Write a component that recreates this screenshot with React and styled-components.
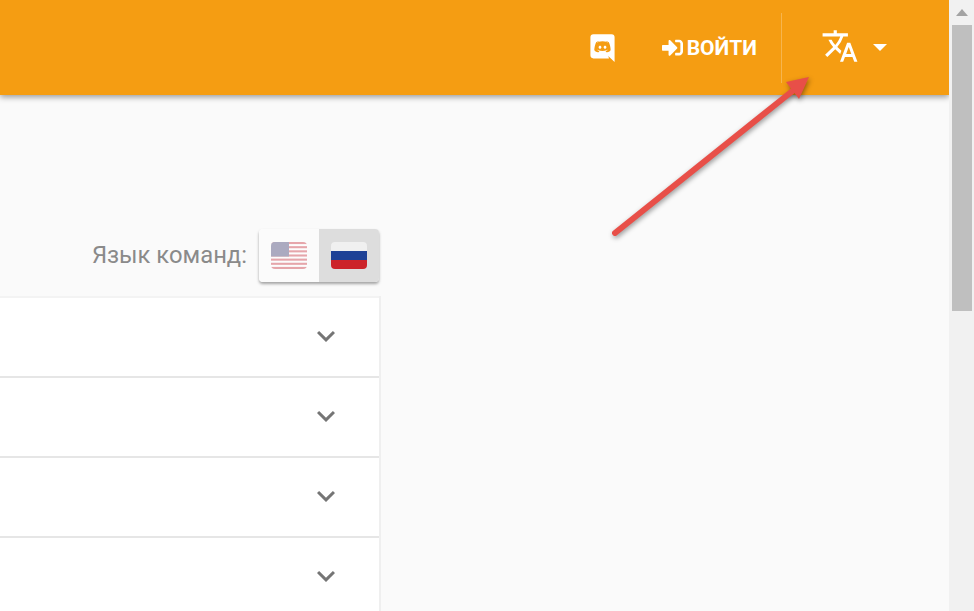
import React from 'react';
import styled, { createGlobalStyle } from 'styled-components';
import { MdTranslate, MdExpandMore } from 'react-icons/md';
import { FaSignInAlt } from 'react-icons/fa';

const Global = createGlobalStyle`
  html, body {
    margin: 0;
    padding: 0;
    height: 100%;
    overflow: hidden;
    background: #fafafa;
    font-family: Roboto, "Liberation Sans", sans-serif;
  }
`;

const Page = styled.div`
  position: relative;
  display: flex;
  width: 974px;
  height: 611px;
  overflow: hidden;
`;

const Main = styled.div`
  flex: 1;
  display: flex;
  flex-direction: column;
  background: #fafafa;
`;

const Header = styled.header`
  height: 95px;
  flex-shrink: 0;
  display: flex;
  align-items: center;
  justify-content: flex-end;
  background: #f59d12;
  box-shadow: 0 2px 6px rgba(0, 0, 0, 0.4);
  color: #fff;
`;

const DiscordLink = styled.a`
  display: flex;
  margin-right: 45px;
`;

const LoginLink = styled.a`
  display: flex;
  align-items: center;
  gap: 4px;
  margin-right: 24px;
  font-size: 21px;
  font-weight: 700;
`;

const Divider = styled.div`
  width: 1px;
  height: 70px;
  background: rgba(255, 255, 255, 0.25);
`;

const LangMenu = styled.div`
  display: flex;
  align-items: center;
  gap: 14px;
  width: 167px;
  padding-left: 39px;
  padding-bottom: 3px;
  box-sizing: border-box;
`;

const Caret = styled.span`
  width: 0;
  height: 0;
  margin-top: 2px;
  border-left: 7.5px solid transparent;
  border-right: 7.5px solid transparent;
  border-top: 7.5px solid #fff;
`;

const Content = styled.main`
  width: 381px;
  display: flex;
  flex-direction: column;
`;

const LangRow = styled.div`
  display: flex;
  align-items: center;
  justify-content: flex-end;
  gap: 12px;
  margin-top: 134px;
  margin-right: 2px;
`;

const LangLabel = styled.span`
  font-size: 23.8px;
  color: #8a8a8a;
  margin-bottom: 2px;
`;

const Toggle = styled.div`
  display: flex;
  border-radius: 4px;
  overflow: hidden;
  box-shadow: 0 2px 3px rgba(0, 0, 0, 0.35);
`;

const ToggleItem = styled.div`
  width: 60px;
  height: 53px;
  display: flex;
  align-items: center;
  justify-content: center;
  background: ${(p) => (p.$active ? '#dddddd' : '#fbfbfb')};
`;

const Panels = styled.div`
  margin-top: 14px;
  background: #fff;
  border-right: 2px solid #efefef;
`;

const Panel = styled.div`
  height: 80px;
  box-sizing: border-box;
  display: flex;
  align-items: center;
  justify-content: flex-end;
  padding-right: 35px;
  padding-bottom: 3px;
  border-top: 2px solid ${(p) => (p.$first ? '#f3f3f3' : '#e6e6e6')};
  color: #757575;
`;

const Scrollbar = styled.div`
  width: 25px;
  flex-shrink: 0;
  display: flex;
  flex-direction: column;
  align-items: center;
  background: #f1f1f1;
`;

const ScrollUp = styled.div`
  width: 0;
  height: 0;
  margin-top: 9px;
  border-left: 6px solid transparent;
  border-right: 6px solid transparent;
  border-bottom: 7px solid #a3a3a3;
`;

const ScrollThumb = styled.div`
  width: 20px;
  height: 286px;
  margin-top: 9px;
  background: #bfbfbf;
`;

const ArrowOverlay = styled.svg`
  position: absolute;
  left: 0;
  top: 0;
  pointer-events: none;
  filter: drop-shadow(1px 2px 2.5px rgba(0, 0, 0, 0.4));
`;

const DiscordIcon = () => (
  <svg width="29" height="29" viewBox="0 0 24 24" fill="#fff">
    <path d="M22,24L16.75,19L17.38,21H4.5A2.5,2.5 0 0,1 2,18.5V3.5A2.5,2.5 0 0,1 4.5,1H19.5A2.5,2.5 0 0,1 22,3.5V24M12,6.8C9.32,6.8 7.44,7.95 7.44,7.95C8.47,7.03 10.27,6.5 10.27,6.5L10.1,6.33C8.41,6.36 6.88,7.53 6.88,7.53C5.16,11.12 5.27,14.22 5.27,14.22C6.67,16.03 8.75,15.9 8.75,15.9L9.46,15C8.21,14.73 7.42,13.62 7.42,13.62C7.42,13.62 9.3,14.9 12,14.9C14.7,14.9 16.58,13.62 16.58,13.62C16.58,13.62 15.79,14.73 14.54,15L15.25,15.9C15.25,15.9 17.33,16.03 18.73,14.22C18.73,14.22 18.84,11.12 17.12,7.53C17.12,7.53 15.59,6.36 13.9,6.33L13.73,6.5C13.73,6.5 15.53,7.03 16.56,7.95C16.56,7.95 14.68,6.8 12,6.8M9.93,10.59C10.58,10.59 11.11,11.16 11.1,11.86C11.1,12.55 10.58,13.13 9.93,13.13C9.29,13.13 8.77,12.55 8.77,11.86C8.77,11.16 9.28,10.59 9.93,10.59M14.1,10.59C14.75,10.59 15.27,11.16 15.26,11.86C15.26,12.55 14.75,13.13 14.1,13.13C13.46,13.13 12.94,12.55 12.94,11.86C12.94,11.16 13.45,10.59 14.1,10.59Z" />
  </svg>
);

const stripes = [0, 1, 2, 3, 4, 5, 6];

const UsFlag = () => (
  <svg width="36" height="27" viewBox="0 0 36 27" opacity="0.42">
    <defs>
      <clipPath id="usClip">
        <rect width="36" height="27" rx="4" />
      </clipPath>
    </defs>
    <g clipPath="url(#usClip)">
      <rect width="36" height="27" fill="#fff" />
      {stripes.map((i) => (
        <rect key={i} y={i * 4.15} width="36" height="2.08" fill="#c8303c" />
      ))}
      <rect width="18" height="14.5" fill="#3c3b6e" />
    </g>
  </svg>
);

const RuFlag = () => (
  <svg width="36" height="27" viewBox="0 0 36 27">
    <defs>
      <clipPath id="ruClip">
        <rect width="36" height="27" rx="4" />
      </clipPath>
    </defs>
    <g clipPath="url(#ruClip)">
      <rect width="36" height="9" fill="#f0f0f0" />
      <rect y="9" width="36" height="9" fill="#1e4196" />
      <rect y="18" width="36" height="9" fill="#cc2329" />
    </g>
  </svg>
);

export default function App() {
  return (
    <Page>
      <Global />
      <Main>
        <Header>
          <DiscordLink>
            <DiscordIcon />
          </DiscordLink>
          <LoginLink>
            <FaSignInAlt size={21} />
            ВОЙТИ
          </LoginLink>
          <Divider />
          <LangMenu>
            <MdTranslate size={38} />
            <Caret />
          </LangMenu>
        </Header>
        <Content>
          <LangRow>
            <LangLabel>Язык команд:</LangLabel>
            <Toggle>
              <ToggleItem>
                <UsFlag />
              </ToggleItem>
              <ToggleItem $active>
                <RuFlag />
              </ToggleItem>
            </Toggle>
          </LangRow>
          <Panels>
            {[0, 1, 2, 3].map((i) => (
              <Panel key={i} $first={i === 0}>
                <MdExpandMore size={36} />
              </Panel>
            ))}
          </Panels>
        </Content>
      </Main>
      <Scrollbar>
        <ScrollUp />
        <ScrollThumb />
      </Scrollbar>
      <ArrowOverlay width="974" height="611" viewBox="0 0 974 611">
        <line x1="615" y1="233" x2="795" y2="89" stroke="#e84f48" strokeWidth="6" strokeLinecap="round" />
        <polygon points="809,77 786,82 799,99" fill="#e84f48" />
      </ArrowOverlay>
    </Page>
  );
}
